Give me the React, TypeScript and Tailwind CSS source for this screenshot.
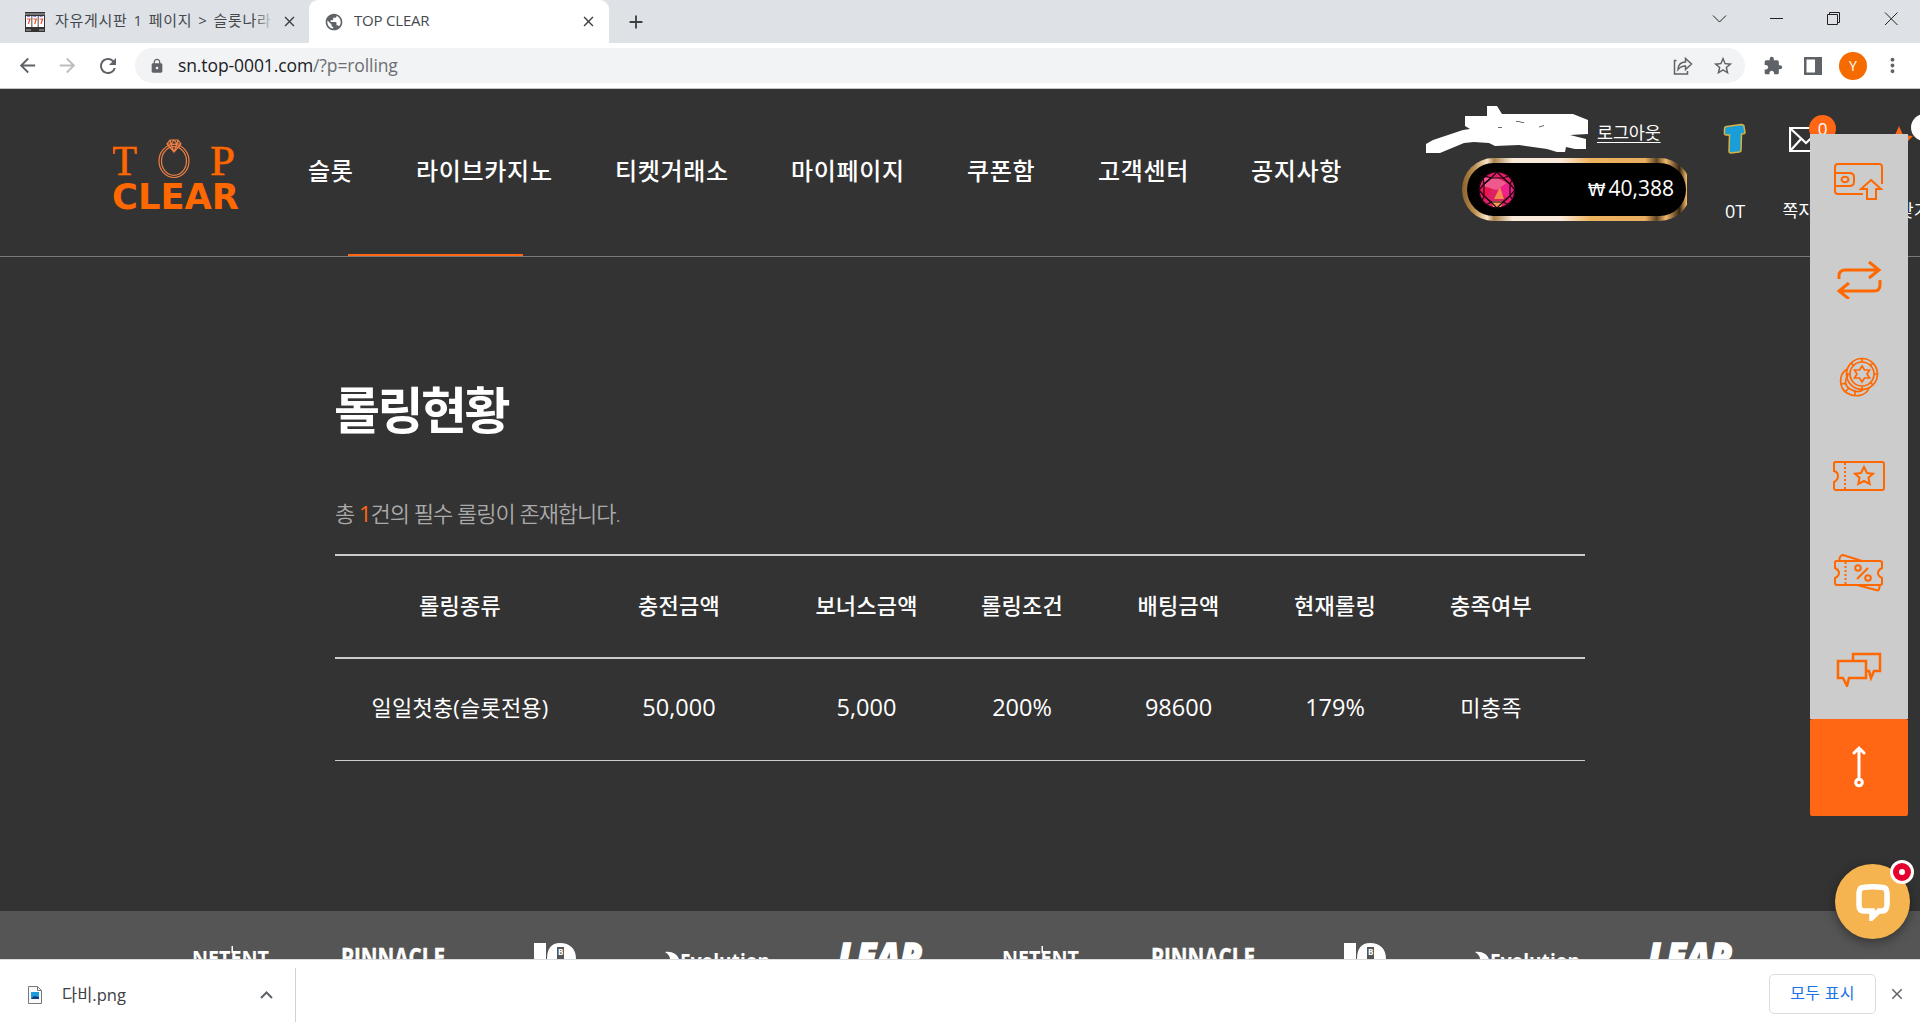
import React from 'react';
import { MdArrowBack, MdArrowForward, MdRefresh, MdLock, MdStarBorder, MdExtension, MdPublic, MdClose, MdAdd, MdMoreVert } from 'react-icons/md';

const menuItems = [
  { label: '슬롯', width: 'w-[108px]' },
  { label: '라이브카지노', width: 'w-[199px]' },
  { label: '티켓거래소', width: 'w-[176px]' },
  { label: '마이페이지', width: 'w-[176px]' },
  { label: '쿠폰함', width: 'w-[131px]' },
  { label: '고객센터', width: 'w-[153px]' },
  { label: '공지사항', width: 'w-[100px]' }
];

const columns = ['롤링종류', '충전금액', '보너스금액', '롤링조건', '배팅금액', '현재롤링', '충족여부'];

const rows = [
  ['일일첫충(슬롯전용)', '50,000', '5,000', '200%', '98600', '179%', '미충족']
];

const TabStrip = () => (
  <div className="flex h-[43px] bg-[#dee1e6] text-[#45494d] text-[15px]">
    <div className="flex items-center w-[309px] pl-[25px]">
      <svg width="20" height="20" viewBox="0 0 20 20">
        <rect width="20" height="20" fill="#333" />
        <rect x="0" y="1" width="20" height="2" fill="#777" />
        <rect x="1" y="4" width="5.4" height="11" fill="#fff" />
        <rect x="7.3" y="4" width="5.4" height="11" fill="#fff" />
        <rect x="13.6" y="4" width="5.4" height="11" fill="#fff" />
        <path d="M2 7h3l-1.6 5M8.3 7h3l-1.6 5M14.6 7h3L16 12" fill="none" stroke="#e8502f" strokeWidth="1.2" />
        <path d="M2 4.5h3M8.3 4.5h3M14.6 4.5h3" stroke="#8b7be0" />
        <rect x="1" y="17" width="5" height="2" fill="#777" />
        <rect x="14" y="17" width="5" height="2" fill="#777" />
      </svg>
      <div className="relative -top-px ml-[10px] w-[219px] overflow-hidden whitespace-nowrap tracking-[0.7px] [word-spacing:1.4px]">
        자유게시판 1 페이지 &gt; 슬롯나라
        <div className="absolute right-0 top-0 h-full w-5 bg-gradient-to-r from-transparent to-[#dee1e6]" />
      </div>
      <MdClose className="ml-[7px] text-[17px] text-[#3c4043]" />
    </div>
    <div className="flex items-center w-[300px] pl-[15px] rounded-t-[9px] bg-white">
      <MdPublic className="text-[20px] text-[#5f6368]" />
      <span className="relative -top-px ml-[10px] w-[226px] text-[15px] tracking-[-0.2px]">TOP CLEAR</span>
      <MdClose className="text-[17px] text-[#3c4043]" />
    </div>
    <div className="flex items-center pl-[16px]">
      <MdAdd className="text-[22px] text-[#3c4043]" />
    </div>
    <svg className="ml-auto" width="220" height="43" viewBox="1700 0 220 43" fill="none" stroke="#222">
      <path d="M1713 15.500l6.500 6.500 6.500-6.500" />
      <path d="M1770 18.500h13" />
      <path d="M1827.500 14.500h10v10h-10zM1829.500 14v-1.500h10V22.500h-1.500" />
      <path d="M1885 12.500l12.500 12.500M1897.500 12.500L1885 25" />
    </svg>
  </div>
);

const Toolbar = () => (
  <div className="flex items-center h-[46px] bg-white border-b border-[#c4c4c6] text-[#5f6368]">
    <MdArrowBack className="ml-4 text-[23px]" />
    <MdArrowForward className="ml-[17px] text-[23px] text-[#bbbdbf]" />
    <MdRefresh className="ml-[17px] text-[24px]" />
    <div className="flex items-center ml-[15px] w-[1610px] h-[35px] pl-[14px] rounded-full bg-[#f1f3f4]">
      <MdLock className="text-[16px]" />
      <span className="ml-[13px] text-[17.500px] text-[#202124] tracking-[-0.1px]">
        sn.top-0001.com<span className="text-[#6b6f73]">/?p=rolling</span>
      </span>
      <svg className="ml-auto" width="20" height="20" viewBox="0 0 20 20" fill="none" stroke="#5f6368" strokeWidth="1.500">
        <path d="M3.500 4.500H1.500v13.500h13v-3M5 13.500c.3-5 3-7.500 7.500-7.500V2.500l6 5.500-6 5.500V10c-3.500 0-5.500 1-7.500 3.500z" />
      </svg>
      <MdStarBorder className="mr-[11px] ml-[19px] text-[22px]" />
    </div>
    <MdExtension className="ml-[18px] text-[20px]" />
    <svg className="ml-[21px]" width="18" height="18" viewBox="0 0 18 18">
      <path fill="#5f6368" d="M0 0h18v18H0zM2.500 2.500v13h8.500v-13z" fillRule="evenodd" />
    </svg>
    <div className="flex items-center justify-center ml-[17px] size-7 rounded-full bg-[#f56b00] text-white text-[14px]">Y</div>
    <MdMoreVert className="ml-[14px] text-[23px]" />
  </div>
);

const Logo = () => (
  <svg width="128" height="72" viewBox="0 0 128 72" fill="#ff6700">
    <g stroke="#ff6700" strokeWidth="0.600" fontFamily="Liberation Serif, serif" fontSize="42">
      <text x="-1" y="36" textLength="25" lengthAdjust="spacingAndGlyphs">T</text>
      <text x="97" y="36" textLength="25" lengthAdjust="spacingAndGlyphs">P</text>
    </g>
    <g fill="none" stroke="#ef7f45" strokeWidth="1.200">
      <ellipse cx="61" cy="22" rx="15" ry="16.500" />
      <ellipse cx="61" cy="22" rx="12.500" ry="14.300" />
      <path d="M57 1h8l3 4-7 8-7-8zM54 5h14M58 5l3 8 3-8M57 1l1 4 3-4 3 4 1-4" />
    </g>
    <text x="-1" y="70" fontSize="36" fontWeight="700" textLength="127" lengthAdjust="spacingAndGlyphs" fontFamily="DejaVu Sans, sans-serif">CLEAR</text>
  </svg>
);

const Gem = () => (
  <svg width="38" height="38" viewBox="0 0 38 38">
    <circle cx="19" cy="19" r="18" fill="#dd1f63" />
    <path d="M6 7l13 0 10 5-10 7-13-3z" fill="#ee5a8e" />
    <path d="M19 19l10-7 6 5-2 12z" fill="#f0218c" />
    <path d="M22 16l4 12H16z" fill="#f48a4f" />
    <path d="M14 30h11l-2 6h-8z" fill="#f79a5a" />
    <path d="M2 15l5 14 6-12z" fill="#f0124d" />
    <g fill="none" stroke="#1c0410" strokeWidth="1.200">
      <circle cx="19" cy="19" r="18" />
      <path d="M13 7h12l7 6v12l-7 6H13l-7-6V13z" />
      <path d="M19 1l6 6 7 6 5 6-5 6-7 6-6 6-6-6-7-6-5-6 5-6 7-6z" />
      <path d="M13 7L7 5M13 7l-7 6-1-8M25 7l6-2M32 13l2-4M6 25l-2 5M13 31l-5 3M25 31l6 3M32 25l3 4" />
    </g>
  </svg>
);

const Header = () => (
  <header className="relative flex h-[168px] overflow-hidden border-b border-[#7a7a7a]">
    <div className="shrink-0 w-[195px] ml-[113px] pt-[50px]"><Logo /></div>
    <nav className="flex shrink-0 w-[1118px] pt-[62px] text-[24px] leading-[40px] font-medium text-white">
      {menuItems.map(item => (
        <a key={item.label} className={`shrink-0 whitespace-nowrap tracking-[0.700px] ${item.width}`}>{item.label}</a>
      ))}
    </nav>
    <div className="shrink-0 w-[262px] pt-[16px]">
      <div className="flex h-[53px]">
        <svg width="164" height="50" viewBox="0 0 164 50" fill="#fff">
          <path d="M61 1h10l5 8h71l15 6v14l-18 1 16 4v10h-11l-9-2-1 5h-8l-10-3-28-4-24 1-6-3-15-1-10 1-24 10H0v-9l7-4 30-10 7-1-5-3V11h22z" />
          <path d="M90 16.500h3l3 1h2M72 22.500h4M113 22l5-1.500" stroke="#444" strokeWidth=".8" fill="none" />
        </svg>
        <a className="ml-[7px] mt-[16px] text-[17.500px] leading-[22px] tracking-[-0.2px] text-white underline underline-offset-[3px] whitespace-nowrap">로그아웃</a>
      </div>
      <div className="ml-[36px] w-[225px] h-[63px] overflow-hidden">
        <div className="w-[229px] h-[63px] p-[5px] rounded-full bg-[linear-gradient(90deg,#8a632c_0%,#b98949_5%,#fbe6c8_11%,#a9824c_14%,#f9ead8_22%,#fbeadb_43%,#eeb35e_56%,#e9ad60_80%,#5e4524_85%,#f0b86d_89%,#352611_95%,#edb465_98%)]">
          <div className="flex items-center w-full h-full pl-[11px] pr-[12px] rounded-full bg-black">
            <Gem />
            <span className="relative -top-px ml-auto text-[21px] text-white whitespace-nowrap">
              <span className="font-['DejaVu_Sans'] text-[18px]">₩</span>
              <span className="ml-[3px]">40,388</span>
            </span>
          </div>
        </div>
      </div>
    </div>
    <div className="flex pt-[31px] text-white text-[17px] whitespace-nowrap">
      <div className="flex flex-col items-center shrink-0 w-[94px]">
        <svg className="mt-[3px]" width="24" height="32" viewBox="0 0 24 32">
          <path d="M1.500 6Q2 3 4 3.500L18 1.500q3 0 3 2l1 6q0 1.500-3.500 1.500l-.5 16q0 2-2 2l-8 1q-2 0-2-2L6.500 12H3q-2 0-1.500-3z" fill="#199ed7" stroke="#d8b344" strokeWidth="1.500" />
        </svg>
        <span className="mt-[43px] text-[18px] leading-[26px]">0T</span>
      </div>
      <div className="relative flex flex-col items-center shrink-0 w-[63px]">
        <svg className="mt-[7px] -ml-[15px]" width="34" height="25" viewBox="0 0 34 25" fill="none" stroke="#fff" strokeWidth="2.200">
          <path d="M1 1h32v23H1zM2 2l15 14L32 2M2 23l10-11M32 23L22 12" />
        </svg>
        <div className="absolute left-[27px] -top-[5px] flex items-center justify-center size-[27px] rounded-full bg-[#ff6714] text-[17px]">0</div>
        <span className="mt-[46px] -ml-[15px] leading-[26px]">쪽지함</span>
      </div>
      <div className="relative flex flex-col items-center shrink-0 w-[100px]">
        <svg className="mt-[6px] ml-[8px]" width="30" height="28" viewBox="0 0 30 28" fill="#ff6714">
          <path d="M15 0l4 9 10 1-7 7 2 10-9-5-9 5 2-10-7-7 10-1z" />
        </svg>
        <div className="absolute left-[66px] -top-[6px] size-[27px] rounded-full bg-white" />
        <span className="mt-[44px] ml-[6px] leading-[26px]">즐겨찾기</span>
      </div>
    </div>
    <div className="absolute left-[348px] bottom-0 w-[175px] h-[2px] bg-[#ff6714]" />
  </header>
);

const RollingTable = () => (
  <div className="w-[1250px] mt-[24px] text-[22px] text-white text-center">
    <div className="grid grid-cols-[250px_188px_171px_156px_157px_156px_156px] h-[105px] pb-[3px] items-center border-y-2 border-[#ccc] font-medium tracking-[0.2px]">
      {columns.map(col => <div key={col} className="nth-[3]:pl-4">{col}</div>)}
    </div>
    {rows.map(row => (
      <div key={row[0]} className="grid grid-cols-[250px_188px_171px_156px_157px_156px_156px] h-[102px] pb-[4px] items-center border-b border-[#ccc]">
        {row.map((cell, i) => (
          <div key={i} className={`nth-[3]:pl-4 ${/^\d/.test(cell) ? 'text-[23.500px]' : 'tracking-[0.2px]'}`}>{cell}</div>
        ))}
      </div>
    ))}
  </div>
);

const Brands = () => (
  <div className="flex shrink-0 w-[810px] h-[48px] overflow-hidden">
    <svg width="810" height="48" viewBox="193 911 810 48" fill="#fff" fontFamily="Open Sans, sans-serif" fontWeight="700">
      <text x="192" y="966" fontSize="21" textLength="77" lengthAdjust="spacingAndGlyphs">NETENT</text>
      <rect x="231.500" y="946" width="1.500" height="7" />
      <text x="341" y="967" fontSize="26" textLength="104" lengthAdjust="spacingAndGlyphs" stroke="#fff" strokeWidth=".5">PINNACLE</text>
      <path d="M534 943h12v16h-12z" />
      <path d="M547 959c0-10 4-16 13-16 10 0 16 6 16 16z" />
      <rect x="557" y="947" width="7" height="12" fill="#555" />
      <text x="558" y="955" fontSize="8">B</text>
      <path d="M665 952c7-1 12 2 14 7h-9c0-3-2-5-5-7z" />
      <text x="680" y="969" fontSize="21" textLength="90" lengthAdjust="spacingAndGlyphs">Evolution</text>
      <text x="838" y="970" fontSize="37" fontWeight="800" fontStyle="italic" textLength="84" lengthAdjust="spacingAndGlyphs" stroke="#fff" strokeWidth="1.500">LEAP</text>
    </svg>
  </div>
);

const sideIcons = [
  // deposit
  <svg key="wallet" width="50" height="40" viewBox="0 0 50 40">
    <path d="M29 31H4q-3 0-3-3V4q0-3 3-3h41q3 0 3 3v17M1 10h14q5 0 5 4v5q0 4-5 4H1M37 17l10 9h-5v10h-9V26h-6z" />
    <ellipse cx="11" cy="16.500" rx="3.500" ry="2.800" />
  </svg>,
  // exchange
  <svg key="swap" className="-mt-[3px]" width="46" height="40" viewBox="0 0 46 40" strokeWidth="3">
    <path d="M3 20v-3q0-6 6-6h34M33 3l10 8-10 8M44 21v5q0 6-6 6H3M13 24L3 32l10 8" />
  </svg>,
  <svg key="chips" className="-mt-[2px]" width="40" height="40" viewBox="0 0 40 40" strokeWidth="1.700">
    <circle cx="23" cy="17" r="15.500" /><circle cx="23" cy="17" r="12" />
    <path d="M23 9l2.500 4h5L28 17l2.500 4h-5L23 25l-2.500-4h-5l2.500-4-2.500-4h5z" />
    <path d="M8 12C-1 18 0 31 8 36s19 3 22-5M9 18c-4 6-3 11 2 14s10 3 13 1M23 1v4M23 29v4M7 17h4M35 17h4M12 6l3 3M34 6l-3 3M34 28l-3-3M3 27l4-1M16 34v4M7 34l3-3" />
  </svg>,
  <svg key="coupon" className="mt-[2px]" width="52" height="30" viewBox="0 0 52 30">
    <path d="M2 1h47q2 0 2 2v24q0 2-2 2H3q-2 0-2-2v-6q4-2 4-6t-4-5V2z" />
    <path d="M12 2v27" strokeDasharray="2 2" />
    <path d="M31 6l3 6 6 .7-4.500 4 1.200 6.300-5.700-3-5.700 3 1.200-6.300-4.500-4 6-.7z" />
  </svg>,
  <svg key="sale" width="50" height="38" viewBox="0 0 50 38">
    <path d="M2 7h44q2 0 2 2v5q-4 2-4 5t4 5v5q0 2-2 2H3q-2 0-2-2v-5q4-2 4-5t-4-5V8zM5 7l1-4q1-2 3-2l19 6M23 31l19 5q3 1 3-1l1-4" />
    <path d="M11.500 8v23" strokeDasharray="2 2" />
    <path d="M23 25l11-11" /><circle cx="24" cy="14" r="2.800" /><circle cx="34" cy="24" r="2.800" />
  </svg>,
  <svg key="chat" className="-mt-[2px]" width="46" height="36" viewBox="0 0 46 36" strokeWidth="2.500">
    <path d="M2 10h28v17H13l-2 8-4-8H2zM17 10V3h27v17h-6l-3 7-2-7h-3" />
  </svg>
];

const SideMenu = () => (
  <div className="absolute left-[1810px] top-[134px] w-[98px]">
    <div className="flex flex-col h-[585px] bg-[#ccc]">
      {sideIcons.map((icon, i) => (
        <div key={i} className="flex flex-1 items-center justify-center fill-none stroke-[#ff6700] stroke-2">{icon}</div>
      ))}
    </div>
    <div className="flex items-center justify-center h-[97px] pb-[2px] rounded-[2px] bg-[#ff6714]">
      <svg width="14" height="42" viewBox="0 0 14 42" fill="none" stroke="#fff" strokeWidth="3">
        <path d="M7 2v31M2 7l5-5 5 5" strokeLinecap="round" /><circle cx="7" cy="36.500" r="3.300" />
      </svg>
    </div>
  </div>
);

const ChatWidget = () => (
  <div className="absolute left-[1835px] top-[864px] flex items-center justify-center size-[75px] rounded-full bg-[#f6b450] shadow-[0_3px_12px_rgba(0,0,0,0.4)]">
    <svg width="38" height="38" viewBox="0 0 38 38" fill="none" stroke="#fff" strokeWidth="5.500">
      <path d="M9 4.500Q19 3 29 4.500q3.500 0 4 5.500v12q-.5 6-5 6h-3l-7 6.500V28H10q-5 0-5-6V10q.5-5.500 4-5.500z" />
    </svg>
    <div className="absolute -right-[4px] -top-[4px] flex items-center justify-center size-[24px] rounded-full bg-[#e5002d] border-[3px] border-white">
      <div className="size-[6px] rounded-full bg-white" />
    </div>
  </div>
);

const DownloadBar = () => (
  <div className="flex items-center h-[71px] bg-white border-t border-[#dadce0] text-[#3c4043]">
    <div className="flex items-center w-[296px] h-[54px] pl-[28px] border-r border-[#d0d2d5]">
      <svg width="14" height="18" viewBox="0 0 14 18">
        <path d="M.5.500h9l4 4v13H.5z" fill="#fafafa" stroke="#777" />
        <path d="M9.500.500v4h4" fill="none" stroke="#777" />
        <path d="M3 6h8v7H3z" fill="#1d9be0" /><path d="M3 13l3-3 5 1v2z" fill="#123c7c" />
      </svg>
      <span className="ml-[20px] text-[16.500px]">다비.png</span>
      <svg className="ml-auto mr-[22px]" width="13" height="8" viewBox="0 0 13 8" fill="none" stroke="#5f6368" strokeWidth="2"><path d="M1 7l5.500-5.500L12 7" /></svg>
    </div>
    <button className="ml-auto mb-[2px] w-[107px] h-[40px] pb-[3px] rounded-[5px] border border-[#dadce0] text-[#1a73e8] text-[16px] tracking-[0.3px]">모두 표시</button>
    <MdClose className="ml-[12px] mr-[14px] mb-[2px] text-[18px] text-[#5f6368]" />
  </div>
);

const App: React.FC = () => {
  return (
    <div className="relative w-[1920px] h-[1030px] overflow-hidden bg-[#333] font-['Open_Sans','Noto_Sans_CJK_KR',sans-serif]">
      <TabStrip />
      <Toolbar />
      <div className="flex flex-col h-[870px]">
        <Header />
        <main className="h-[654px] pl-[335px] pt-[113px]">
          <h1 className="text-[50px] leading-[80px] font-bold text-white tracking-[-2.500px] -ml-px">롤링현황</h1>
          <p className="mt-[47px] text-[22px] leading-[33px] font-[350] text-[#aaa] tracking-[-1px]">
            총 <span className="font-normal text-[#ff6714]">1</span>건의 필수 롤링이 존재합니다.
          </p>
          <RollingTable />
        </main>
        <div className="flex h-[48px] pl-[193px] overflow-hidden bg-[#555]">
          <Brands />
          <Brands />
        </div>
      </div>
      <DownloadBar />
      <SideMenu />
      <ChatWidget />
    </div>
  );
};

export default App;
